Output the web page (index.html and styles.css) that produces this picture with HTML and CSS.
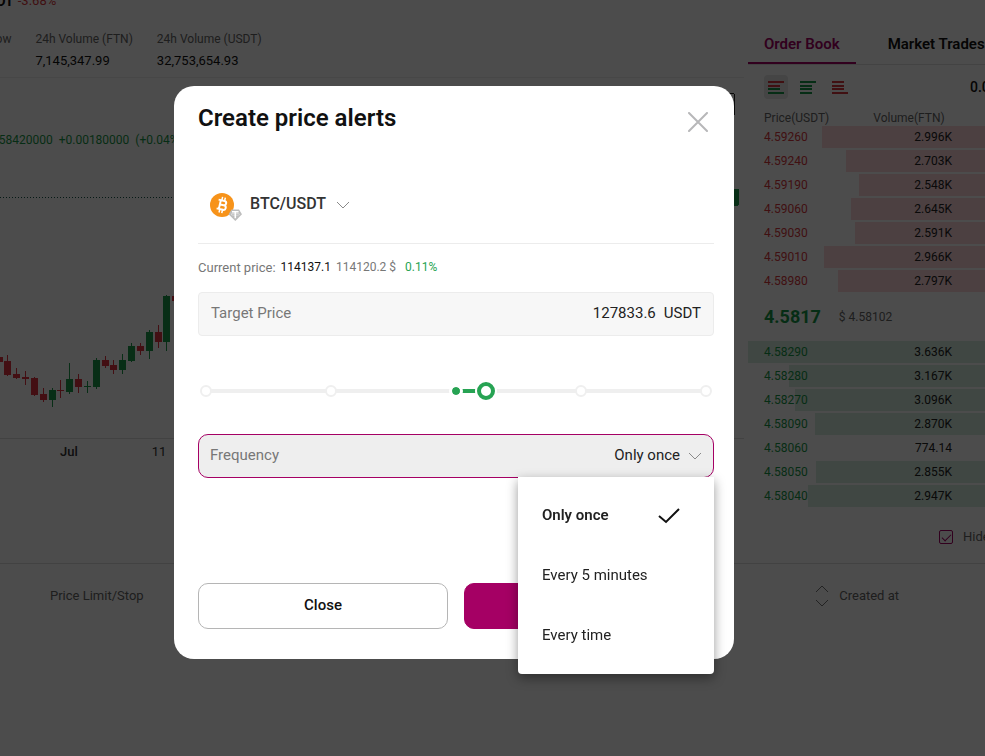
FILE: index.html
```html
<!DOCTYPE html>
<html lang="en">
  <head>
    <meta charset="utf-8">
    <title>Create price alerts</title>
    <link rel="stylesheet" href="styles.css">
  </head>
  <body>
    <div class="page">
      <main class="market">
        <div class="ticker">
          <strong>FTN/USDT</strong>
          <span class="down">-3.68%</span>
        </div>
        <div class="stats">
          <div class="stat"><span class="stat-label">24h Low</span></div>
          <div class="stat"><span class="stat-label">24h Volume (FTN)</span><span>7,145,347.99</span></div>
          <div class="stat"><span class="stat-label">24h Volume (USDT)</span><span>32,753,654.93</span></div>
        </div>

        <div class="chart">
          <div class="legend"><span>C4.58420000</span><span>+0.00180000</span><span>(+0.04%)</span></div>
          <svg class="candles" width="744" height="360" viewBox="0 78 744 360" fill="none" shape-rendering="crispEdges">
            <path stroke="#17594a" stroke-dasharray="1 2" d="M0 197.500H734"/>
            <g stroke="#e03540">
              <path stroke-width="7" d="M-.5 357v5M7.500 361v14M16.500 374v4M25.500 377v2M34.500 378v17M43.500 394v6M60.500 390v1M78.500 379v8M105.500 360v6M113.500 365v5M140.500 346v5M158.500 332v10M175.500 296v5"/>
              <path d="M7.500 355v21M16.500 368v11M25.500 371v14M34.500 377v19M43.500 388v14M60.500 380v18M78.500 374v19M105.500 356v12M113.500 360v14M140.500 343v12M158.500 325v23"/>
            </g>
            <g stroke="#1d9a4b">
              <path stroke-width="7" d="M52.500 390v10M69.500 379v13M87.500 386v1M96.500 360v27M122.500 360v10M131.500 346v15M149.500 332v19M166.500 296v46"/>
              <path d="M52.500 388v19M69.500 363v31M87.500 381v12M96.500 358v31M122.500 354v20M131.500 343v19M149.500 330v29M166.500 295v56"/>
            </g>
            <rect x="640" y="189" width="99" height="17" rx="2" fill="#1d9a4b"/>
            <rect x="690.500" y="93.500" width="44" height="22" rx="2" stroke="#222"/>
          </svg>
          <div class="axis"><span class="month">Jul</span><span>11</span></div>
        </div>
      </main>

      <aside class="book">
        <nav class="tabs">
          <a class="tab current" href="#book">Order Book</a>
          <a class="tab" href="#trades">Market Trades</a>
        </nav>
        <div class="views">
          <button class="view selected" aria-label="Both sides">
            <svg width="16" height="14" fill="none" stroke-width="2"><path stroke="#d8373c" d="M0 2h16M0 6h12"/><path stroke="#179848" d="M0 9h12M0 13h16"/></svg>
          </button>
          <button class="view" aria-label="Bids">
            <svg width="16" height="14" fill="none" stroke="#179848" stroke-width="2"><path d="M0 2h16M0 6h12M0 9h12M0 13h12"/></svg>
          </button>
          <button class="view" aria-label="Asks">
            <svg width="16" height="14" fill="none" stroke="#d8373c" stroke-width="2"><path d="M0 2h12M0 6h12M0 9h12M0 13h16"/></svg>
          </button>
          <select class="precision" aria-label="Precision"><option>0.00001</option></select>
        </div>
        <div class="book-head"><span>Price(USDT)</span><span>Volume(FTN)</span></div>

        <table class="orders asks">
          <tr style="--depth: 76.7%"><td>4.59260</td><td>2.996K</td><td></td></tr>
          <tr style="--depth: 69.2%"><td>4.59240</td><td>2.703K</td><td></td></tr>
          <tr style="--depth: 65.2%"><td>4.59190</td><td>2.548K</td><td></td></tr>
          <tr style="--depth: 67.7%"><td>4.59060</td><td>2.645K</td><td></td></tr>
          <tr style="--depth: 66.4%"><td>4.59030</td><td>2.591K</td><td></td></tr>
          <tr style="--depth: 76%"><td>4.59010</td><td>2.966K</td><td></td></tr>
          <tr style="--depth: 71.6%"><td>4.58980</td><td>2.797K</td><td></td></tr>
        </table>
        <div class="last-price"><strong>4.5817</strong><span>$ 4.58102</span></div>
        <table class="orders bids">
          <tr style="--depth: 100%"><td>4.58290</td><td>3.636K</td><td></td></tr>
          <tr style="--depth: 87.1%"><td>4.58280</td><td>3.167K</td><td></td></tr>
          <tr style="--depth: 85.1%"><td>4.58270</td><td>3.096K</td><td></td></tr>
          <tr style="--depth: 78.9%"><td>4.58090</td><td>2.870K</td><td></td></tr>
          <tr style="--depth: 21.3%"><td>4.58060</td><td>774.14</td><td></td></tr>
          <tr style="--depth: 78.5%"><td>4.58050</td><td>2.855K</td><td></td></tr>
          <tr style="--depth: 81.1%"><td>4.58040</td><td>2.947K</td><td></td></tr>
        </table>
        <label class="hide-pairs"><input type="checkbox" checked>Hide other pairs</label>
      </aside>

      <section class="history">
        <span>Price Limit/Stop</span>
        <span class="history-date">
          <svg width="14" height="22" fill="none" stroke="#777"><path d="M1 7l6-6 6 6M1 15l6 6 6-6"/></svg>
          Created at
        </span>
      </section>
    </div>

    <div class="overlay">
      <form class="dialog" role="dialog" aria-labelledby="title">
        <header class="dialog-head">
          <h2 id="title">Create price alerts</h2>
          <button type="button" class="dismiss" aria-label="Dismiss">
            <svg width="20" height="20" fill="none" stroke="#b7b7b9" stroke-width="2" stroke-linecap="round"><path d="M1 1l18 18M19 1L1 19"/></svg>
          </button>
        </header>

        <div class="pair">
          <svg class="coins" width="32" height="30" viewBox="0 0 32 30">
            <circle cx="12" cy="13" r="12" fill="#f7931a"/>
            <g transform="rotate(13 12 13)" fill="none" stroke="#fff" stroke-width="2">
              <path d="M7.500 8.500h6a2.200 2.200 0 0 1 0 4.400h-4M9.800 8.500v9M9.800 12.900h4.200a2.300 2.300 0 0 1 0 4.600H7.500"/>
              <path stroke-width="1.500" d="M10.800 5v3.500M13.600 5v3.500M10.800 17.500v3.500M13.600 17.500v3.500"/>
            </g>
            <path d="M21.500 17.500h7.500l3 4.700-6.700 6.800-6.700-6.800z" fill="#bdbdbd"/>
            <path d="M22 19.800h6.600M25.300 19.800v6.400" fill="none" stroke="#fff" stroke-width="1.600"/>
            <ellipse cx="25.300" cy="22.300" rx="4.300" ry="1" fill="none" stroke="#fff" stroke-width=".4"/>
          </svg>
          <select aria-label="Trading pair"><option>BTC/USDT</option></select>
          <svg width="14" height="8" fill="none" stroke="#8a8a8a"><path d="M1 1l6 6 6-6"/></svg>
        </div>

        <div class="current-price">
          <span class="caption">Current price:</span>
          <span class="last">114137.1</span>
          <span>114120.2 $</span>
          <span class="change">0.11%</span>
        </div>

        <div class="field">
          <label for="target">Target Price</label>
          <input id="target" type="text" value="127833.6">
          <span>USDT</span>
        </div>

        <div class="slider">
          <div class="marks">
            <i class="mark"></i>
            <i class="mark"></i>
            <i class="mark origin"></i>
            <i class="mark"></i>
            <i class="mark"></i>
            <i class="fill" style="width: 6%"></i>
          </div>
          <input type="range" min="-100" max="100" value="12" aria-label="Price change">
        </div>

        <div class="field frequency">
          <label for="frequency">Frequency</label>
          <select id="frequency">
            <option>Only once</option>
            <option>Every 5 minutes</option>
            <option>Every time</option>
          </select>
          <svg width="14" height="8" fill="none" stroke="#8a8a8a"><path d="M1 1l6 6 6-6"/></svg>
          <div class="menu" role="listbox">
            <button type="button" class="option chosen" role="option" aria-selected="true">
              Only once
              <svg width="22" height="16" fill="none" stroke="#111" stroke-width="2"><path d="M1 8l7 6L21 1"/></svg>
            </button>
            <button type="button" class="option" role="option">Every 5 minutes</button>
            <button type="button" class="option" role="option">Every time</button>
          </div>
        </div>

        <footer class="actions">
          <button type="button" class="btn">Close</button>
          <button type="submit" class="btn primary">Create</button>
        </footer>
      </form>
    </div>
  </body>
</html>
```

FILE: styles.css
```css
* {
  box-sizing: border-box;
}

body {
  margin: 0;
  height: 100vh;
  overflow: hidden;
  font-family: Roboto, Arial, sans-serif;
  font-size: 13px;
  color: #111;
  background: #fff;
}

button,
input,
select {
  margin: 0;
  padding: 0;
  border: none;
  background: none;
  font: inherit;
  color: inherit;
}

select {
  appearance: none;
}

a {
  color: inherit;
  text-decoration: none;
}

/* trading page */
.page {
  display: grid;
  grid-template-columns: minmax(744px, 1fr) 318px;
  column-gap: 4px;
  overflow: hidden;
}

.market {
  min-width: 0;
}

.ticker {
  display: flex;
  gap: 4px;
  height: 20px;
  margin: -9px 0 0 -53px;
  line-height: 20px;
}

.ticker strong {
  font-size: 14px;
}

.down {
  color: #d8373c;
}

.stats {
  display: flex;
  gap: 24px;
  height: 67px;
  margin-left: -34px;
  padding-top: 18px;
  border-bottom: 1px solid #eee;
}

.stat {
  display: flex;
  flex-direction: column;
  line-height: 21px;
}

.stat-label {
  font-size: 12px;
  color: #666;
}

.chart {
  position: relative;
}

.legend {
  position: absolute;
  top: 52px;
  left: -19px;
  display: flex;
  gap: 6px;
  font-size: 12px;
  line-height: 20px;
  color: #179848;
}

.candles {
  display: block;
}

.axis {
  display: flex;
  gap: 74px;
  height: 27px;
  padding-left: 60px;
  border-top: 1px solid #ddd;
  line-height: 26px;
  color: #333;
}

.month {
  font-weight: 500;
}

.book {
  height: 563px;
}

.tabs {
  display: flex;
  gap: 16px;
  height: 65px;
  padding-top: 24px;
  border-bottom: 1px solid #e2e2e2;
}

.tab {
  padding: 0 16px;
  font-size: 15px;
  font-weight: 600;
  line-height: 40px;
  white-space: nowrap;
}

.tab.current {
  color: #a50064;
  border-bottom: 2px solid #a50064;
}

.views {
  display: flex;
  gap: 8px;
  padding: 10px 16px;
}

.view {
  width: 24px;
  height: 24px;
  border-radius: 4px;
}

.view.selected {
  background: #e6e6e6;
}

.view svg {
  display: block;
  margin: auto;
}

.precision {
  margin-left: auto;
  width: 80px;
  font-size: 14px;
  font-weight: 500;
}

.book-head {
  display: flex;
  gap: 44px;
  padding-left: 16px;
  font-size: 12px;
  line-height: 18px;
  color: #666;
}

.orders {
  width: 100%;
  table-layout: fixed;
  border-spacing: 0 2px;
  font-size: 12px;
  line-height: 22px;
  color: #222;
}

.orders tr {
  background: linear-gradient(to left, var(--bar) var(--depth), transparent var(--depth));
}

.orders td {
  padding: 0;
  text-align: right;
}

.orders td:first-child {
  padding-left: 16px;
  text-align: left;
}

.orders td:nth-child(2) {
  padding-right: 8px;
}

.asks {
  --bar: #ffd7da;
  margin-top: -3px;
}

.bids {
  --bar: #d5eedf;
}

.orders.asks td:first-child {
  color: #d8373c;
}

.orders.bids td:first-child {
  color: #179848;
}

.last-price {
  display: flex;
  align-items: center;
  gap: 18px;
  height: 45px;
  padding-left: 16px;
  font-size: 12px;
  color: #666;
}

.last-price strong {
  font-size: 18px;
  color: #179848;
}

.hide-pairs {
  display: flex;
  align-items: center;
  gap: 10px;
  margin-top: 18px;
  padding-left: 191px;
  line-height: 20px;
  color: #666;
  white-space: nowrap;
}

.hide-pairs input {
  appearance: none;
  display: grid;
  place-items: center;
  width: 14px;
  height: 14px;
  border: 1px solid #a50064;
  border-radius: 2px;
}

.hide-pairs input:checked::before {
  content: "";
  width: 8px;
  height: 4px;
  margin-bottom: 2px;
  border: solid #a50064;
  border-width: 0 0 1px 1px;
  transform: rotate(-45deg);
}

.history {
  grid-column: 1 / -1;
  display: flex;
  align-items: center;
  justify-content: space-between;
  height: 64px;
  padding: 0 167px 0 50px;
  border-top: 1px solid #ddd;
  color: #666;
}

.history-date {
  display: flex;
  align-items: center;
  gap: 10px;
}

/* dialog */
.overlay {
  position: fixed;
  inset: 0;
  display: flex;
  justify-content: center;
  align-items: flex-start;
  padding: 86px 77px 0 0;
  background: rgba(0, 0, 0, 0.7);
}

.dialog {
  width: 560px;
  padding: 16px 20px 30px 24px;
  border-radius: 20px;
  background: #fff;
  font-size: 15px;
}

.dialog-head {
  display: flex;
  justify-content: space-between;
}

.dialog-head h2 {
  margin: 0;
  font-size: 24px;
  font-weight: 600;
  line-height: 32px;
}

.dismiss {
  display: grid;
  place-items: center;
  width: 32px;
  height: 40px;
}

.pair {
  display: flex;
  align-items: center;
  height: 78px;
  margin-top: 24px;
  padding-left: 12px;
  border-bottom: 1px solid #ececec;
}

.coins {
  margin-top: 4px;
}

.pair select {
  margin: 0 9px 2px 8px;
  font-size: 16px;
  font-weight: 500;
  color: #333;
}

.current-price {
  display: flex;
  align-items: center;
  gap: 5px;
  height: 48px;
  padding-bottom: 2px;
  font-size: 12px;
  color: #777;
}

.caption {
  font-size: 13px;
}

.last {
  color: #111;
}

.change {
  margin-left: 4px;
  color: #27a353;
}

.field {
  display: flex;
  align-items: center;
  height: 44px;
  padding: 0 12px 2px;
  border: 1px solid #ececec;
  border-radius: 4px;
  background: #f7f7f7;
  color: #222;
}

.field label {
  color: #777;
}

.field input,
.field select {
  flex: 1;
  min-width: 0;
  margin-right: 8px;
  text-align: right;
  text-align-last: right;
}

.field svg {
  margin-top: 2px;
}

.slider {
  position: relative;
  height: 18px;
  margin: 46px 0 34px;
}

.marks {
  position: relative;
  display: flex;
  align-items: center;
  justify-content: space-between;
  height: 18px;
  margin: 0 2px;
  background: linear-gradient(#efefef, #efefef) center / calc(100% - 12px) 4px no-repeat;
}

.mark {
  width: 12px;
  height: 12px;
  border: 2px solid #efefef;
  border-radius: 50%;
  background: #fff;
}

.mark.origin {
  border-color: #fff;
  background: #27a353;
  background-clip: padding-box;
  box-shadow: 0 0 0 1px #fff;
  z-index: 1;
}

.fill {
  position: absolute;
  left: 50%;
  height: 4px;
  background: #27a353;
}

.slider input {
  position: absolute;
  inset: 0;
  width: 100%;
  height: 18px;
  appearance: none;
  z-index: 2;
}

.slider input::-webkit-slider-thumb {
  appearance: none;
  width: 18px;
  height: 18px;
  border: 4px solid #27a353;
  border-radius: 50%;
  background: #fff;
  box-shadow: 0 0 0 2px #fff;
}

.frequency {
  position: relative;
  padding: 0 11px 2px;
  border-color: #a50064;
  border-radius: 10px;
  background: #eee;
}

.menu {
  position: absolute;
  top: 100%;
  right: -1px;
  width: 196px;
  padding: 8px 0 9px;
  border-radius: 0 0 4px 4px;
  background: #fff;
  box-shadow: 0 4px 12px rgba(0, 0, 0, 0.4);
}

.option {
  display: flex;
  align-items: center;
  justify-content: space-between;
  width: 100%;
  height: 60px;
  padding: 0 34px 0 24px;
}

.chosen {
  font-weight: 600;
}

.actions {
  display: grid;
  grid-template-columns: 1fr 1fr;
  gap: 16px;
  margin-top: 105px;
}

.btn {
  height: 46px;
  padding-bottom: 2px;
  border: 1px solid #b5b5b5;
  border-radius: 10px;
  font-weight: 500;
}

.primary {
  border-color: #a50064;
  background: #a50064;
  color: #fff;
}
```
